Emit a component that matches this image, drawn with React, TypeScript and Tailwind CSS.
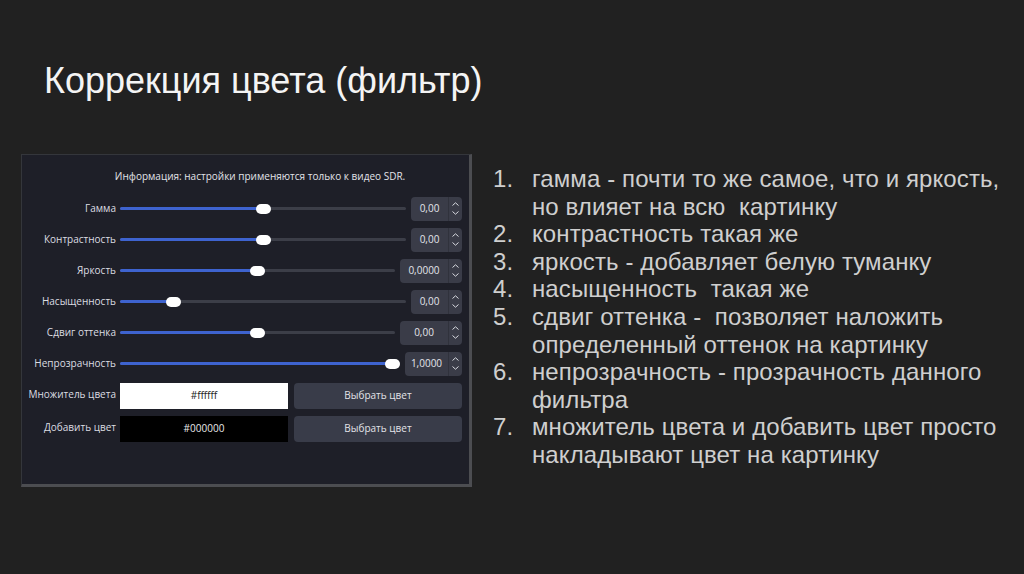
import React from "react";

type SliderRow = {
  label: string;
  value: string;
  pos: number;
  box: string;
};

const SLIDERS: SliderRow[] = [
  { label: "Гамма", value: "0,00", pos: 0.5, box: "w-[51px]" },
  { label: "Контрастность", value: "0,00", pos: 0.5, box: "w-[51px]" },
  { label: "Яркость", value: "0,0000", pos: 0.5, box: "w-[62px]" },
  { label: "Насыщенность", value: "0,00", pos: 0.17, box: "w-[51px]" },
  { label: "Сдвиг оттенка", value: "0,00", pos: 0.5, box: "w-[62px]" },
  { label: "Непрозрачность", value: "1,0000", pos: 1, box: "w-[57px]" },
];

const NOTES: string[][] = [
  ["гамма - почти то же самое, что и яркость,", "но влияет на всю  картинку"],
  ["контрастность такая же"],
  ["яркость - добавляет белую туманку"],
  ["насыщенность  такая же"],
  ["сдвиг оттенка -  позволяет наложить", "определенный оттенок на картинку"],
  ["непрозрачность - прозрачность данного", "фильтра"],
  ["множитель цвета и добавить цвет просто", "накладывают цвет на картинку"],
];

const Chevron = ({ up }: { up?: boolean }) => (
  <svg width="7" height="4" viewBox="0 0 7 4" className="block" aria-hidden>
    <path
      d={up ? "M0.5 3.5 L3.5 0.8 L6.5 3.5" : "M0.5 0.5 L3.5 3.2 L6.5 0.5"}
      fill="none"
      stroke="#d8dae0"
      strokeWidth="1"
    />
  </svg>
);

const Slider = ({ pos }: { pos: number }) => (
  <div className="relative flex-1 h-[10px] flex items-center">
    <div className="w-full h-[3px] rounded-full bg-[#3c3e48]" />
    <div
      className="absolute left-0 top-[3.5px] h-[3px] rounded-full bg-[#3e63cf]"
      style={{ width: `calc(${pos} * (100% - 15px) + 7px)` }}
    />
    <div
      className="absolute top-0 w-[15px] h-[10px] rounded-[5px] bg-white"
      style={{ left: `calc(${pos} * (100% - 15px))` }}
    />
  </div>
);

const SpinBox = ({ value, box }: { value: string; box: string }) => (
  <div className={`${box} h-[24px] flex rounded-[4px] bg-[#3a3c48] text-[10px] text-[#e4e5ea]`}>
    <div className="flex-1 flex items-center justify-center">{value}</div>
    <div className="w-[14px] flex flex-col items-center justify-center gap-[5px] border-l border-[#30323c]">
      <Chevron up />
      <Chevron />
    </div>
  </div>
);

const Label = ({ text, lift }: { text: string; lift?: boolean }) => (
  <div
    className={`w-[98px] pr-[4px] text-right text-[10px] text-[#dcdde2] whitespace-nowrap ${lift ? "-mt-[2px]" : ""}`}
  >
    {text}
  </div>
);

const ColorRow = ({ label, hex, dark }: { label: string; hex: string; dark?: boolean }) => (
  <div className="h-[33px] flex items-center">
    <Label text={label} lift />
    <div className="flex-1 flex items-center gap-[6px]">
      <div
        className={`w-[168px] h-[26px] flex items-center justify-center text-[10px] ${dark ? "bg-black text-[#e8e8e8]" : "bg-white text-[#222]"}`}
      >
        {hex}
      </div>
      <div className="flex-1 h-[26px] rounded-[4px] bg-[#393c49] flex items-center justify-center text-[10px] text-[#e2e3e8]">
        Выбрать цвет
      </div>
    </div>
  </div>
);

const FilterPanel = () => (
  <div
    className="w-[451px] h-[333px] bg-[#1e1f28] border border-[#34363b] border-r-[3px] border-b-[3px] border-r-[#4c4d51] border-b-[#4c4d51] pt-[14px] pr-[7px]"
    style={{ fontFamily: '"Open Sans", "Noto Sans", sans-serif' }}
  >
    <div className="h-[14px] pl-[36px] text-[10px] leading-[14px] text-[#e2e3e8] text-center">
      Информация: настройки применяются только к видео SDR.
    </div>

    <div className="mt-[10px] flex flex-col">
      {SLIDERS.map((row) => (
        <div key={row.label} className="h-[31px] flex items-center">
          <Label text={row.label} />
          <div className="flex-1 flex items-center gap-[5px]">
            <Slider pos={row.pos} />
            <SpinBox value={row.value} box={row.box} />
          </div>
        </div>
      ))}

      <ColorRow label="Множитель цвета" hex="#ffffff" />
      <ColorRow label="Добавить цвет" hex="#000000" dark />
    </div>
  </div>
);

export default function App() {
  return (
    <div
      className="w-[1024px] h-[574px] bg-[#212121] overflow-hidden"
      style={{ fontFamily: '"Liberation Sans", Arial, sans-serif' }}
    >
      <h1 className="pt-[61px] pl-[44px] h-[101px] text-[36px] leading-[40px] font-normal text-[#f4f4f4]">
        Коррекция цвета (фильтр)
      </h1>

      <div className="mt-[53px] flex">
        <div className="ml-[21px]">
          <FilterPanel />
        </div>

        <ol className="ml-[21px] mt-[11px] text-[24px] leading-[27.6px] tracking-[0.1px] text-[#cfcfcf]">
          {NOTES.map((lines, i) => (
            <li key={i} className="flex">
              <span className="w-[39px] shrink-0">{i + 1}.</span>
              <span className="whitespace-pre">
                {lines.map((l, j) => (
                  <React.Fragment key={j}>
                    {j > 0 && <br />}
                    {l}
                  </React.Fragment>
                ))}
              </span>
            </li>
          ))}
        </ol>
      </div>
    </div>
  );
}
